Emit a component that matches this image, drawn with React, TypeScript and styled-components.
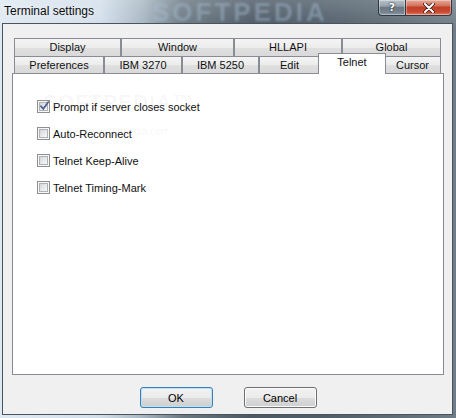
import React from "react";
import styled, { createGlobalStyle, css } from "styled-components";

const GlobalStyle = createGlobalStyle`
  html, body { margin: 0; padding: 0; background: #ffffff; }
  body { font-family: "Liberation Sans", Arial, sans-serif; }
  * { box-sizing: border-box; }
`;

const Window = styled.div`
  width: 456px;
  height: 418px;
  display: flex;
  flex-direction: column;
  padding: 0 3px 3px 2px;
  position: relative;
  overflow: hidden;
  background:
    linear-gradient(180deg, rgba(255,255,255,0.18) 0%, rgba(255,255,255,0) 30px),
    linear-gradient(90deg, #dfe9f2 0%, #d2dfeb 22%, #a9b8c4 31%, #6a7882 40%, #4c5965 55%, #4f5d69 70%, #5d6b76 85%, #6f7d88 100%);
`;

const TitleBar = styled.div`
  height: 23px;
  display: flex;
  align-items: flex-start;
  position: relative;
  flex-shrink: 0;
`;

const TitleText = styled.div`
  position: relative;
  z-index: 1;
  padding-left: 2px;
  line-height: 22px;
  font-size: 12px;
  color: #0c0c0c;
  text-shadow: 0 0 6px rgba(255, 255, 255, 0.9);
`;

const TitleWatermark = styled.div`
  position: absolute;
  left: 150px;
  top: 0;
  height: 23px;
  line-height: 24px;
  font-family: "Liberation Sans", Arial, sans-serif;
  font-weight: bold;
  font-size: 26px;
  letter-spacing: 3px;
  color: rgba(165, 187, 208, 0.45);
  filter: blur(0.9px);
  pointer-events: none;
`;

const CaptionButtons = styled.div`
  margin-left: auto;
  margin-right: 1px;
  display: flex;
  position: relative;
  z-index: 1;
`;

const CaptionButton = styled.div<{ $close?: boolean }>`
  height: 16px;
  width: ${(p) => (p.$close ? 46 : 28)}px;
  display: flex;
  align-items: center;
  justify-content: center;
  border: 1px solid #2f3a44;
  border-top: none;
  box-shadow: inset 0 0 0 1px rgba(255, 255, 255, 0.35);
  ${(p) =>
    p.$close
      ? css`
          border-radius: 0 0 4px 0;
          border-left: none;
          background: linear-gradient(180deg, #e5a898 0%, #d57a65 35%, #c33f27 50%, #c94a33 80%, #e0826a 100%);
        `
      : css`
          border-radius: 0 0 0 4px;
          background: linear-gradient(180deg, #b8c2cb 0%, #97a3ad 40%, #6c7984 50%, #75838e 80%, #8d9aa5 100%);
        `}
`;

const HelpGlyph = styled.span`
  font-family: "DejaVu Sans", sans-serif;
  font-weight: bold;
  font-size: 11px;
  line-height: 1;
  color: #ffffff;
  text-shadow: 0 0 1px #1d2630, 0 0 2px #1d2630;
`;

const Client = styled.div`
  flex: 1;
  display: flex;
  flex-direction: column;
  border: 1px solid #4a545d;
  background: #f0f0f0;
  padding: 14px 8px 6px 9px;
`;

const TabStrip = styled.div`
  display: flex;
  flex-direction: column;
  padding: 0 3px 0 2px;
`;

const TabRow = styled.div<{ $h: number }>`
  display: flex;
  align-items: flex-end;
  height: ${(p) => p.$h}px;
`;

const Tab = styled.div<{ $w: number; $active?: boolean }>`
  width: ${(p) => p.$w}px;
  height: 100%;
  flex-shrink: 0;
  display: flex;
  align-items: center;
  justify-content: center;
  padding-bottom: 1px;
  font-size: 11px;
  color: #111;
  border: 1px solid #898c95;
  border-bottom: none;
  background: linear-gradient(180deg, #f4f4f4 0%, #ececec 50%, #e0e0e0 51%, #d9d9d9 100%);
  ${(p) =>
    p.$active &&
    css`
      position: relative;
      z-index: 2;
      height: 21px;
      margin: 0 -2px -1px -2px;
      padding-bottom: 4px;
      background: #ffffff;
    `}
`;

const Panel = styled.div`
  flex: 1;
  position: relative;
  background: #ffffff;
  border: 1px solid #898c95;
  padding: 26px 0 0 24px;
  display: flex;
  flex-direction: column;
  gap: 14px;
`;

const PanelWatermark = styled.div`
  position: absolute;
  left: 30px;
  top: 16px;
  font-weight: bold;
  font-size: 21px;
  letter-spacing: 1px;
  color: rgba(0, 0, 0, 0.04);
  pointer-events: none;
`;

const PanelWatermarkUrl = styled.div`
  position: absolute;
  left: 70px;
  top: 52px;
  font-size: 10px;
  color: rgba(0, 0, 0, 0.06);
  pointer-events: none;
`;

const CheckRow = styled.label`
  display: flex;
  align-items: center;
  gap: 3px;
  height: 13px;
  font-size: 11px;
  color: #111;
  position: relative;
`;

const Box = styled.span`
  width: 13px;
  height: 13px;
  flex-shrink: 0;
  position: relative;
  border: 1px solid #8e8f8f;
  background: #f8f8f8;
  padding: 1px;
  display: block;
`;

const BoxInner = styled.span`
  display: block;
  width: 100%;
  height: 100%;
  border: 1px solid #aeb2b7;
  background: linear-gradient(135deg, #d3d6da 0%, #e6e8ea 50%, #f9f9f9 100%);
`;

const Tick = styled.svg`
  position: absolute;
  left: 0;
  top: -1px;
`;

const ButtonRow = styled.div`
  display: flex;
  justify-content: center;
  gap: 31px;
  margin-top: 12px;
`;

const Button = styled.div<{ $primary?: boolean }>`
  width: 73px;
  height: 21px;
  display: flex;
  align-items: center;
  justify-content: center;
  font-size: 11px;
  color: #000;
  border-radius: 3px;
  border: 1px solid ${(p) => (p.$primary ? "#3c7fb1" : "#707070")};
  background: linear-gradient(180deg, #f2f2f2 0%, #ebebeb 50%, #dddddd 51%, #cfcfcf 100%);
  box-shadow: inset 0 0 0 1px ${(p) => (p.$primary ? "#b9e1f8" : "#fbfbfb")};
`;

const row1 = [
  { label: "Display", w: 107 },
  { label: "Window", w: 113 },
  { label: "HLLAPI", w: 108 },
  { label: "Global", w: 99 },
];

const row2 = [
  { label: "Preferences", w: 90 },
  { label: "IBM 3270", w: 78 },
  { label: "IBM 5250", w: 77 },
  { label: "Edit", w: 61 },
  { label: "Telnet", w: 68, active: true },
  { label: "Cursor", w: 57 },
];

const options = [
  { label: "Prompt if server closes socket", checked: true },
  { label: "Auto-Reconnect", checked: false },
  { label: "Telnet Keep-Alive", checked: false },
  { label: "Telnet Timing-Mark", checked: false },
];

function Checkbox({ checked }: { checked: boolean }) {
  return (
    <Box>
      <BoxInner />
      {checked && (
        <Tick width="13" height="13" viewBox="0 0 13 13">
          <path d="M3 6.2 L5.3 8.8 L10.2 2.2" fill="none" stroke="#4e5f8e" strokeWidth="1.7" strokeLinecap="square" />
        </Tick>
      )}
    </Box>
  );
}

export default function App() {
  return (
    <>
      <GlobalStyle />
      <Window>
        <TitleBar>
          <TitleWatermark>SOFTPEDIA</TitleWatermark>
          <TitleText>Terminal settings</TitleText>
          <CaptionButtons>
            <CaptionButton>
              <HelpGlyph>?</HelpGlyph>
            </CaptionButton>
            <CaptionButton $close>
              <svg width="12" height="10" viewBox="0 0 12 10">
                <path d="M2 1 L10 9 M10 1 L2 9" stroke="#3a1a14" strokeWidth="3.6" strokeLinecap="round" />
                <path d="M2 1 L10 9 M10 1 L2 9" stroke="#ffffff" strokeWidth="2" strokeLinecap="round" />
              </svg>
            </CaptionButton>
          </CaptionButtons>
        </TitleBar>
        <Client>
          <TabStrip>
            <TabRow $h={18}>
              {row1.map((t) => (
                <Tab key={t.label} $w={t.w}>
                  {t.label}
                </Tab>
              ))}
            </TabRow>
            <TabRow $h={17}>
              {row2.map((t) => (
                <Tab key={t.label} $w={t.w} $active={t.active}>
                  {t.label}
                </Tab>
              ))}
            </TabRow>
          </TabStrip>
          <Panel>
            <PanelWatermark>SOFTPEDIA™</PanelWatermark>
            <PanelWatermarkUrl>www.softpedia.com</PanelWatermarkUrl>
            {options.map((o) => (
              <CheckRow key={o.label}>
                <Checkbox checked={o.checked} />
                {o.label}
              </CheckRow>
            ))}
          </Panel>
          <ButtonRow>
            <Button $primary>OK</Button>
            <Button>Cancel</Button>
          </ButtonRow>
        </Client>
      </Window>
    </>
  );
}
